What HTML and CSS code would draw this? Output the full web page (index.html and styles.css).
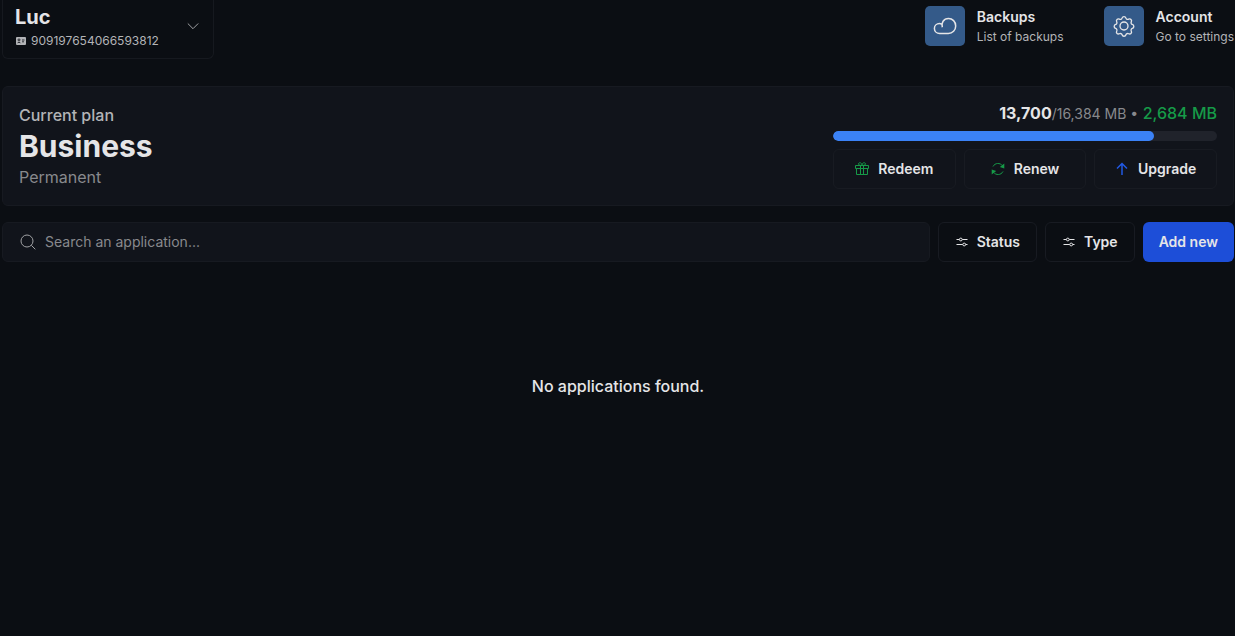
FILE: index.html
```html
<!DOCTYPE html>
<html lang="en">
<head>
<meta charset="utf-8">
<title>Dashboard</title>
<link rel="stylesheet" href="styles.css">
</head>
<body>
<div class="page">
  <header class="header">
    <button class="profile" type="button">
      <span class="profile-info">
        <span class="profile-name">Luc</span>
        <span class="profile-id">
          <svg class="icon-id" viewBox="0 0 12 12" aria-hidden="true">
            <rect x="1" y="2" width="10" height="8" rx="1" fill="currentColor"/>
            <circle cx="4" cy="4.900" r="1" fill="none" stroke="#0b0e13" stroke-width=".8"/>
            <path d="M2.500 8.200C2.600 7 5.400 7 5.500 8.200M7 5h2.500M7 6.800h2" fill="none" stroke="#0b0e13" stroke-width=".8"/>
          </svg>
          909197654066593812
        </span>
      </span>
      <svg class="chevron" viewBox="0 0 12 12" aria-hidden="true"><path d="M.8 1.500 6 6.700l5.200-5.200"/></svg>
    </button>
    <nav class="shortcuts">
      <a class="shortcut" href="#backups">
        <span class="tile">
          <svg viewBox="0 0 24 24" aria-hidden="true"><path d="M9.300 13.200C8 9 10.600 4.500 15.500 4.500c4 0 7.200 3.200 7.200 7.400s-3.200 7.600-7.400 7.600H6.700c-3 0-5.300-2.200-5.300-5S3.600 9.600 6.500 9.600c.7 0 1.400.1 2 .4"/></svg>
        </span>
        <span class="shortcut-text"><strong>Backups</strong><small>List of backups</small></span>
      </a>
      <a class="shortcut" href="#account">
        <span class="tile">
          <svg viewBox="-1.500 -1.500 27 27" aria-hidden="true"><circle cx="12" cy="12" r="4.500"/><path d="M9.800 3.100c.7-2.200 3.700-2.200 4.400 0 .4 1.300 1.800 1.900 3 1.200 2-1.100 4.100 1 3 3-.6 1.100 0 2.600 1.200 3 2.200.7 2.200 3.700 0 4.400-1.200.4-1.800 1.800-1.200 3 1.100 2-1 4.100-3 3-1.200-.6-2.600 0-3 1.200-.7 2.200-3.700 2.200-4.400 0-.4-1.200-1.800-1.800-3-1.200-2 1.100-4.100-1-3-3 .6-1.200 0-2.600-1.200-3-2.200-.7-2.200-3.700 0-4.400 1.200-.4 1.800-1.900 1.200-3-1.100-2 1-4.100 3-3 1.200.7 2.600.1 3-1.200z"/></svg>
        </span>
        <span class="shortcut-text"><strong>Account</strong><small>Go to settings</small></span>
      </a>
    </nav>
  </header>

  <main>
    <section class="plan">
      <div class="plan-info">
        <p class="plan-label">Current plan</p>
        <h1 class="plan-name">Business</h1>
        <p class="plan-term">Permanent</p>
      </div>
      <div class="usage">
        <p class="usage-text"><strong>13,700</strong><span class="usage-total">/16,384 MB •</span> <span class="usage-free">2,684 MB</span></p>
        <div class="bar" role="progressbar" aria-label="Memory used" aria-valuemin="0" aria-valuemax="16384" aria-valuenow="13700"><div class="bar-fill" style="width: 83.600%"></div></div>
        <div class="plan-actions">
          <button class="button" type="button">
            <svg class="green" viewBox="0 0 14 14" aria-hidden="true"><path d="M.5 3.500h13v3H.5zM1.500 6.500v6h11v-6M5.500 3.500v9M8.500 3.500v9M7 3.500C5.800 3.500 3.500 3.300 3.500 1.900 3.500.2 7 0 7 3.500c0-3.500 3.500-3.300 3.500-1.600C10.500 3.300 8.200 3.500 7 3.500"/></svg>
            Redeem
          </button>
          <button class="button" type="button">
            <svg class="green" viewBox="0 0 14 14" aria-hidden="true"><path d="M2 4.500C4 .7 9 .5 11.600 3.800M12 9.500c-2 3.800-7 4-9.600.7"/><path class="solid" d="M13.300 1.500v5L8.800 5zM.7 12.500v-5L5.200 9z"/></svg>
            Renew
          </button>
          <button class="button" type="button">
            <svg class="blue" viewBox="0 0 14 14" aria-hidden="true"><path d="M7 13V1.500M2 6.500l5-5 5 5"/></svg>
            Upgrade
          </button>
        </div>
      </div>
    </section>

    <form class="toolbar">
      <label class="search">
        <svg viewBox="0 0 16 16" aria-hidden="true"><circle cx="7" cy="7" r="6"/><path d="m11.300 11.300 4 4"/></svg>
        <input type="text" placeholder="Search an application..." aria-label="Search an application">
      </label>
      <button class="button filter" type="button">
        <svg viewBox="0 0 14 14" aria-hidden="true"><path d="M1.500 4.500h2.800M7.300 4.500h5.200M1.500 9.500h6.200M10.700 9.500h1.800"/><circle cx="5.800" cy="4.500" r="1.400"/><circle cx="9.200" cy="9.500" r="1.400"/></svg>
        Status
      </button>
      <button class="button filter" type="button">
        <svg viewBox="0 0 14 14" aria-hidden="true"><path d="M1.500 4.500h2.800M7.300 4.500h5.200M1.500 9.500h6.200M10.700 9.500h1.800"/><circle cx="5.800" cy="4.500" r="1.400"/><circle cx="9.200" cy="9.500" r="1.400"/></svg>
        Type
      </button>
      <button class="button primary" type="button">Add new</button>
    </form>

    <p class="empty">No applications found.</p>
  </main>
</div>
</body>
</html>
```
FILE: styles.css
```css
* { box-sizing: border-box; }

body {
  margin: 0;
  background: #0b0e13;
  color: #e5e5e7;
  font-family: Inter, "Liberation Sans", sans-serif;
  font-size: 16px;
  line-height: 24px;
}

p, h1 { margin: 0; }

button, input {
  font: inherit;
  color: inherit;
}

a {
  color: inherit;
  text-decoration: none;
}

svg {
  display: block;
  flex: none;
  fill: none;
  stroke: currentColor;
}

.page { padding: 0 1px 0 2px; }

.header {
  display: flex;
  justify-content: space-between;
  align-items: flex-start;
}

.profile {
  display: flex;
  align-items: center;
  justify-content: space-between;
  width: 212px;
  padding: 4px 14px 6px 12px;
  background: none;
  border: 1px solid #16191f;
  border-top: 0;
  border-radius: 0 0 6px 6px;
  text-align: left;
}

.profile-info {
  display: flex;
  flex-direction: column;
}

.profile-name {
  font-size: 20px;
  font-weight: 700;
  line-height: 26px;
}

.profile-id {
  display: flex;
  align-items: center;
  gap: 4px;
  color: #b3b4b7;
  font-size: 12px;
  line-height: 22px;
}

.icon-id {
  width: 12px;
  height: 12px;
  stroke: none;
}

.chevron {
  width: 12px;
  height: 12px;
  color: #a0a1a4;
}

.shortcuts {
  display: flex;
  gap: 40px;
  padding-top: 6px;
}

.shortcut {
  display: flex;
  align-items: flex-start;
  gap: 12px;
}

.tile {
  display: grid;
  place-items: center;
  width: 40px;
  height: 40px;
  border-radius: 5px;
  background: #345a89;
}

.tile svg {
  width: 24px;
  height: 24px;
  stroke-width: 1.500;
}

.shortcut-text {
  display: flex;
  flex-direction: column;
  padding-top: 1px;
  line-height: 20px;
}

.shortcut-text strong {
  font-size: 14px;
  font-weight: 600;
}

.shortcut-text small {
  color: #b3b4b7;
  font-size: 12px;
}

.plan {
  display: flex;
  justify-content: space-between;
  margin-top: 27px;
  padding: 16px;
  background: #11141b;
  border: 1px solid #171a21;
  border-radius: 6px;
}

.plan-label {
  color: #b3b4b7;
  font-weight: 500;
}

.plan-name {
  font-size: 30px;
  font-weight: 700;
  line-height: 38px;
}

.plan-term { color: #88898d; }

.usage {
  display: flex;
  flex-direction: column;
  gap: 8px;
  width: 384px;
}

.usage-text {
  line-height: 20px;
  text-align: right;
}

.usage-text strong { font-weight: 700; }

.usage-total {
  color: #88898d;
  font-size: 14px;
  line-height: 16px;
}

.usage-free {
  color: #169a48;
  font-weight: 500;
}

.bar {
  height: 10px;
  overflow: hidden;
  background: #20232b;
  border-radius: 5px;
}

.bar-fill {
  height: 100%;
  background: #3b82f6;
  border-radius: 5px;
}

.plan-actions {
  display: grid;
  grid-template-columns: repeat(3, 1fr);
  gap: 8px;
}

.button {
  display: flex;
  align-items: center;
  justify-content: center;
  gap: 8px;
  height: 40px;
  padding: 0 16px;
  background: none;
  border: 1px solid #181b22;
  border-radius: 6px;
  font-size: 14px;
  font-weight: 600;
  white-space: nowrap;
}

.plan-actions .button { gap: 9px; }

.button svg {
  width: 14px;
  height: 14px;
}

.green { color: #169a48; }

.blue {
  color: #2158e4;
  stroke-width: 1.500;
}

.solid {
  fill: currentColor;
  stroke: none;
}

.toolbar {
  display: flex;
  gap: 8px;
  margin-top: 16px;
}

.search {
  display: flex;
  flex: 1;
  align-items: center;
  gap: 9px;
  height: 40px;
  padding: 0 17px;
  background: #11141b;
  border: 1px solid #171a21;
  border-radius: 6px;
}

.search svg {
  width: 16px;
  height: 16px;
  color: #a0a1a4;
}

.search input {
  flex: 1;
  min-width: 0;
  padding: 0;
  background: none;
  border: 0;
  outline: 0;
  font-size: 14px;
}

.search input::placeholder { color: #88898d; }

.primary {
  background: #1d4ed8;
  border: 0;
}

.empty {
  padding: 112px 16px;
  font-weight: 500;
  text-align: center;
}
```
